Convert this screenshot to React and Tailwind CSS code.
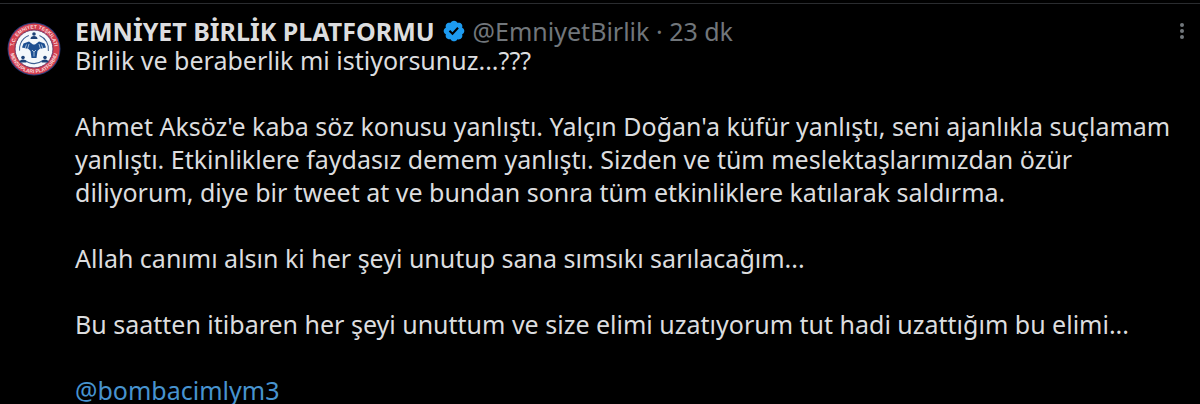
const paragraphs = [
  'Birlik ve beraberlik mi istiyorsunuz...???',
  "Ahmet Aksöz'e kaba söz konusu yanlıştı. Yalçın Doğan'a küfür yanlıştı, seni ajanlıkla suçlamam yanlıştı. Etkinliklere faydasız demem yanlıştı. Sizden ve tüm meslektaşlarımızdan özür diliyorum, diye bir tweet at ve bundan sonra tüm etkinliklere katılarak saldırma.",
  'Allah canımı alsın ki her şeyi unutup sana sımsıkı sarılacağım...',
  'Bu saatten itibaren her şeyi unuttum ve size elimi uzatıyorum tut hadi uzattığım bu elimi...',
]

function Person({ x, y }) {
  return (
    <g transform={`translate(${x} ${y})`} fill="#1d4277">
      <circle cx="0" cy="-3" r="3.6" />
      <path d="M-7 7c0-4 3-6 7-6s7 2 7 6z" />
    </g>
  )
}

function Avatar() {
  return (
    <svg viewBox="0 0 108 108" className="size-[54px]" role="img" aria-label="Emniyet Birlik Platformu">
      <defs>
        <path id="ringTop" d="M25 83a41 41 0 1 1 58 0" />
        <path id="ringBottom" d="M6 54a48 48 0 0 0 96 0" />
      </defs>
      <circle cx="54" cy="54" r="53" fill="#2b3c7c" />
      <circle cx="54" cy="54" r="51" fill="#d4404e" />
      <circle cx="54" cy="54" r="38" fill="#f4f8fb" stroke="#6f3563" strokeWidth="2" />
      <g fill="#f7d9de" fontSize="10" fontWeight="700" fontFamily="Liberation Sans, sans-serif" textAnchor="middle">
        <text><textPath href="#ringTop" startOffset="50%">T.C. EMNİYET TEŞKİLATI</textPath></text>
        <text><textPath href="#ringBottom" startOffset="50%">MENSUPLARI PLATFORMU</textPath></text>
      </g>
      <circle cx="54" cy="54" r="29" fill="none" stroke="#3d5f92" strokeWidth="2" strokeDasharray="38 22.7" transform="rotate(-68 54 54)" />
      <Person x={54} y={27} />
      <Person x={32} y={74} />
      <Person x={76} y={74} />
      <path d="M33 43l11-4 8 6h4l8-6 11 4 3 8-13 3-4 4-2 14H49l-2-14-4-4-13-3z" fill="#1d4f91" />
      <path d="M36 53l3-8m2 9l3-10m28 9l-3-8m-2 9l-3-10M50 56l4 4 4-4m-4 4v9" stroke="#dcebf6" strokeWidth="1.4" fill="none" />
    </svg>
  )
}

function VerifiedBadge() {
  return (
    <svg viewBox="1 1 20 20" className="size-[22px] shrink-0" fill="#1d9bf0" role="img" aria-label="Onaylanmış hesap">
      <path d="M20.396 11c-.018-.646-.215-1.275-.57-1.816-.354-.54-.852-.972-1.438-1.246.223-.607.27-1.264.14-1.897-.131-.634-.437-1.218-.882-1.687-.47-.445-1.053-.75-1.687-.882-.633-.13-1.29-.083-1.897.14-.273-.587-.704-1.086-1.245-1.44S11.647 1.62 11 1.604c-.646.017-1.273.213-1.813.568s-.969.854-1.24 1.44c-.608-.223-1.267-.272-1.902-.14-.635.13-1.22.436-1.69.882-.445.47-.749 1.055-.878 1.688-.13.633-.08 1.29.144 1.896-.587.274-1.087.705-1.443 1.245-.356.54-.555 1.17-.574 1.817.02.647.218 1.276.574 1.817.356.54.856.972 1.443 1.245-.224.606-.274 1.263-.144 1.896.13.634.433 1.218.877 1.688.47.443 1.054.747 1.687.878.633.132 1.29.084 1.897-.136.274.586.705 1.084 1.246 1.439.54.354 1.17.551 1.816.569.647-.016 1.276-.213 1.817-.567s.972-.854 1.245-1.44c.604.239 1.266.296 1.903.164.636-.132 1.22-.447 1.68-.907.46-.46.776-1.044.908-1.681s.075-1.299-.165-1.903c.586-.274 1.084-.705 1.439-1.246.354-.54.551-1.17.569-1.816zM9.662 14.85l-3.429-3.428 1.293-1.302 2.072 2.072 4.4-4.794 1.347 1.246z" />
    </svg>
  )
}

export default function App() {
  return (
    <main className="min-h-screen bg-black pt-[3px] font-['Noto_Sans',sans-serif] text-[25px] leading-[33px] text-[#dcdddf]">
      <article className="flex border-t border-[#2a2c2f] pr-3 pl-[7px]">
        <a href="#profile" className="mt-[18px] mr-3.5 shrink-0 self-start rounded-full">
          <Avatar />
        </a>
        <div className="min-w-0 flex-1 pt-3.5">
          <header className="flex h-[26px] items-center">
            <a href="#profile" className="font-bold whitespace-nowrap">EMNİYET BİRLİK PLATFORMU</a>
            <span className="mx-2"><VerifiedBadge /></span>
            <div className="whitespace-nowrap text-[#71767b]">
              <a href="#profile">@EmniyetBirlik</a> · <time>23 dk</time>
            </div>
            <button type="button" aria-label="Daha fazla" className="ml-auto text-[#71767b]">
              <svg viewBox="0 0 12 18" className="h-[18px] w-3" fill="currentColor">
                <circle cx="6" cy="3" r="2" />
                <circle cx="6" cy="9" r="2" />
                <circle cx="6" cy="15" r="2" />
              </svg>
            </button>
          </header>
          <div className="space-y-[33px]">
            {paragraphs.map((text) => <p key={text}>{text}</p>)}
            <p><a href="#mention" className="text-[#4793cf]">@bombacimlym3</a></p>
          </div>
        </div>
      </article>
    </main>
  )
}
